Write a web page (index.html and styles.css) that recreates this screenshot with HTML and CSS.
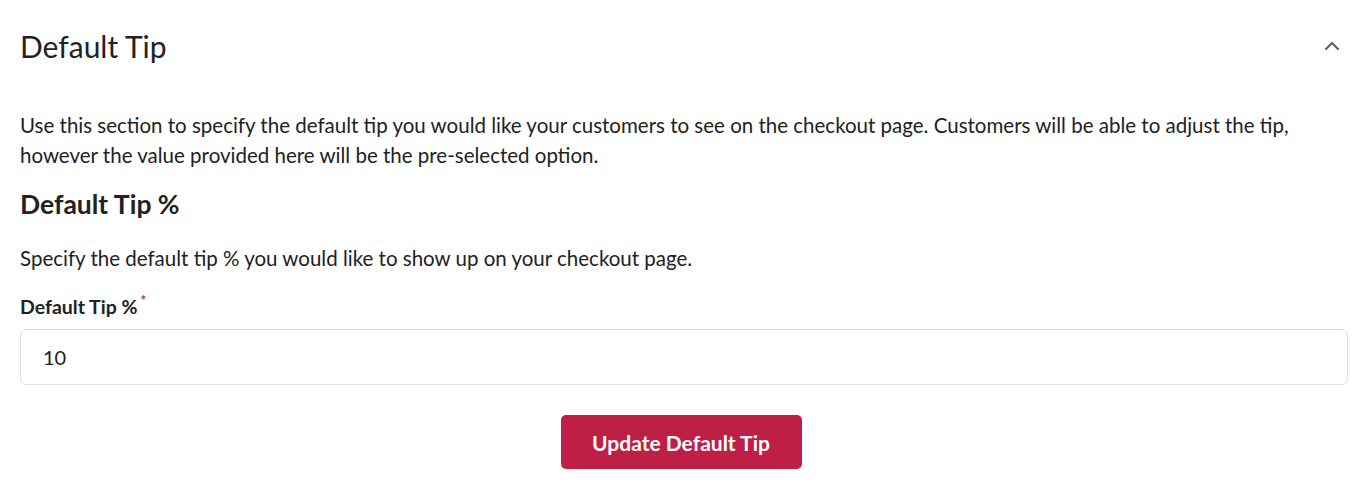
FILE: index.html
```html
<!DOCTYPE html>
<html>
<head>
<meta charset="utf-8">
<link rel="stylesheet" href="styles.css">
</head>
<body>
<section class="panel">
  <header class="panel-header">
    <h2 class="panel-title">Default Tip</h2>
    <button class="collapse" aria-label="Collapse">
      <svg width="16" height="10" viewBox="0 0 16 10"><path d="M2 8 L8 2 L14 8" fill="none" stroke="#666" stroke-width="2.2" stroke-linecap="round" stroke-linejoin="round"/></svg>
    </button>
  </header>
  <p class="intro">Use this section to specify the default tip you would like your customers to see on the checkout page. Customers will be able to adjust the tip, however the value provided here will be the pre-selected option.</p>
  <h3 class="sub-title">Default Tip %</h3>
  <p class="sub-desc">Specify the default tip % you would like to show up on your checkout page.</p>
  <label class="field-label" for="tip">Default Tip %<span class="req">*</span></label>
  <input id="tip" class="field-input" type="text" value="10">
  <div class="actions">
    <button class="btn-primary">Update Default Tip</button>
  </div>
</section>
</body>
</html>
```
FILE: styles.css
```css
* { box-sizing: border-box; }
html, body { margin: 0; padding: 0; background: #fff; }
body { font-family: Lato, "Open Sans", sans-serif; color: #222; }
.panel { padding: 0 12px 0 20px; }
.panel-header { display: flex; align-items: center; justify-content: space-between; height: 91px; }
.panel-title { margin: 0; font-size: 30px; font-weight: 400; color: #222; }
.collapse { border: 0; background: none; padding: 0; width: 24px; height: 24px; display: flex; align-items: center; justify-content: center; margin-right: 4px; }
.intro { margin: 19px 0 0; font-size: 20.5px; line-height: 30px; color: #222; }
.sub-title { margin: 17px 0 0; font-size: 26.5px; font-weight: 700; line-height: 34px; }
.sub-desc { margin: 22px 0 0; font-size: 20.5px; line-height: 30px; }
.field-label { display: block; margin-top: 21px; font-size: 19.5px; font-weight: 700; line-height: 26px; }
.req { color: #d0283c; font-size: 14px; vertical-align: top; margin-left: 3px; position: relative; top: -7px; }
.field-input { display: block; width: 100%; height: 56px; margin-top: 9px; border: 1px solid #ddd; border-radius: 6px; padding: 0 22px; font-family: inherit; font-size: 20px; color: #222; }
.actions { display: flex; justify-content: center; margin-top: 30px; padding-right: 6px; }
.btn-primary { width: 241px; height: 54px; border: 0; border-radius: 5px; background: #bf1f45; color: #fff; font-family: inherit; font-size: 21px; font-weight: 700; }
```
